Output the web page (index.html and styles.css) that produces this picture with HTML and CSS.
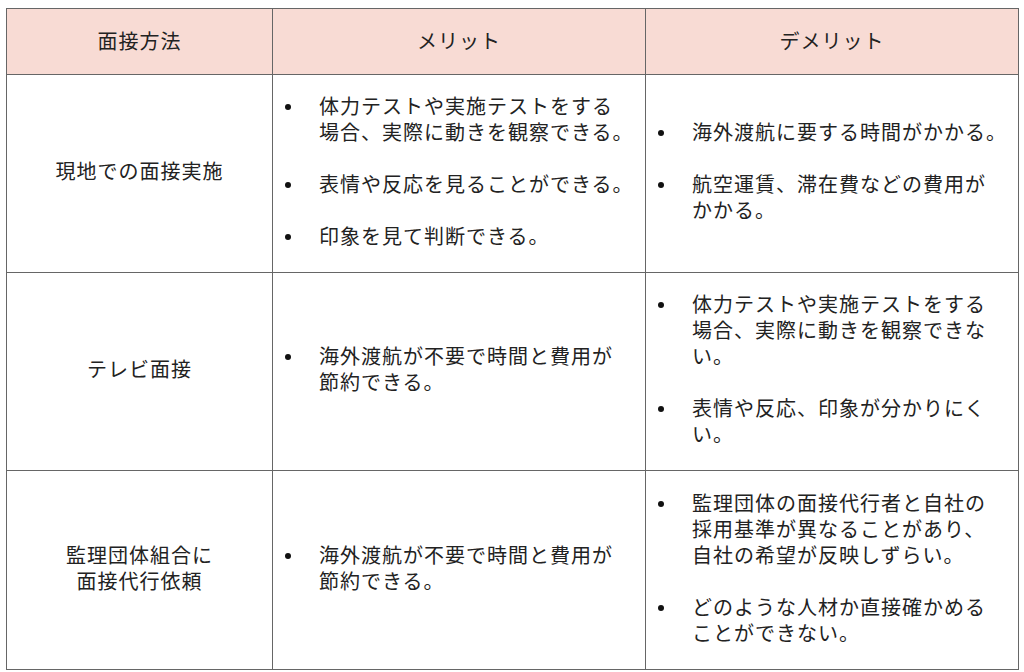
FILE: index.html
```html
<!DOCTYPE html>
<html lang="ja">
<head>
<meta charset="utf-8">
<link rel="stylesheet" href="styles.css">
</head>
<body>
<table class="cmp">
  <colgroup>
    <col class="c1"><col class="c2"><col class="c3">
  </colgroup>
  <thead>
    <tr class="head"><th>面接方法</th><th>メリット</th><th>デメリット</th></tr>
  </thead>
  <tbody>
    <tr class="r1">
      <td class="method">現地での面接実施</td>
      <td><ul class="pts">
        <li><span>体力テストや実施テストをする<br>場合、実際に動きを観察できる。</span></li>
        <li><span>表情や反応を見ることができる。</span></li>
        <li><span>印象を見て判断できる。</span></li>
      </ul></td>
      <td><ul class="pts">
        <li><span>海外渡航に要する時間がかかる。</span></li>
        <li><span>航空運賃、滞在費などの費用が<br>かかる。</span></li>
      </ul></td>
    </tr>
    <tr class="r2">
      <td class="method">テレビ面接</td>
      <td><ul class="pts">
        <li><span>海外渡航が不要で時間と費用が<br>節約できる。</span></li>
      </ul></td>
      <td><ul class="pts">
        <li><span>体力テストや実施テストをする<br>場合、実際に動きを観察できな<br>い。</span></li>
        <li><span>表情や反応、印象が分かりにく<br>い。</span></li>
      </ul></td>
    </tr>
    <tr class="r3">
      <td class="method">監理団体組合に<br>面接代行依頼</td>
      <td><ul class="pts">
        <li><span>海外渡航が不要で時間と費用が<br>節約できる。</span></li>
      </ul></td>
      <td><ul class="pts">
        <li><span>監理団体の面接代行者と自社の<br>採用基準が異なることがあり、<br>自社の希望が反映しずらい。</span></li>
        <li><span>どのような人材か直接確かめる<br>ことができない。</span></li>
      </ul></td>
    </tr>
  </tbody>
</table>
</body>
</html>
```
FILE: styles.css
```css
html, body {
  margin: 0;
  padding: 0;
  background: #ffffff;
}
body {
  padding: 8px 6px 0 6px;
  font-family: "Noto Sans CJK JP", "Noto Sans", sans-serif;
  font-size: 20px;
  letter-spacing: 1px;
  color: #222222;
}
.cmp {
  border-collapse: collapse;
  width: 1012px;
  table-layout: fixed;
}
.c1 { width: 266px; }
.c2 { width: 373px; }
.c3 { width: 373px; }
.cmp th, .cmp td {
  border: 1px solid #666666;
  padding: 0 0 5px 0;
  vertical-align: middle;
  line-height: 26px;
}
.cmp th {
  background: #f8dbd4;
  font-weight: normal;
  text-align: center;
  padding-bottom: 2px;
}
.head { height: 66px; }
.r1 { height: 198px; }
.r2 { height: 198px; }
.r3 { height: 199px; }
.method {
  text-align: center;
  line-height: 27px;
}
.pts {
  list-style: none;
  margin: 0;
  padding: 0 0 0 12px;
  display: flex;
  flex-direction: column;
  gap: 26px;
}
.pts li {
  display: flex;
  white-space: nowrap;
}
.pts li::before {
  content: "";
  flex: 0 0 6px;
  width: 6px;
  height: 6px;
  border-radius: 50%;
  background: #111111;
  margin: 11px 28px 0 0;
}
```
